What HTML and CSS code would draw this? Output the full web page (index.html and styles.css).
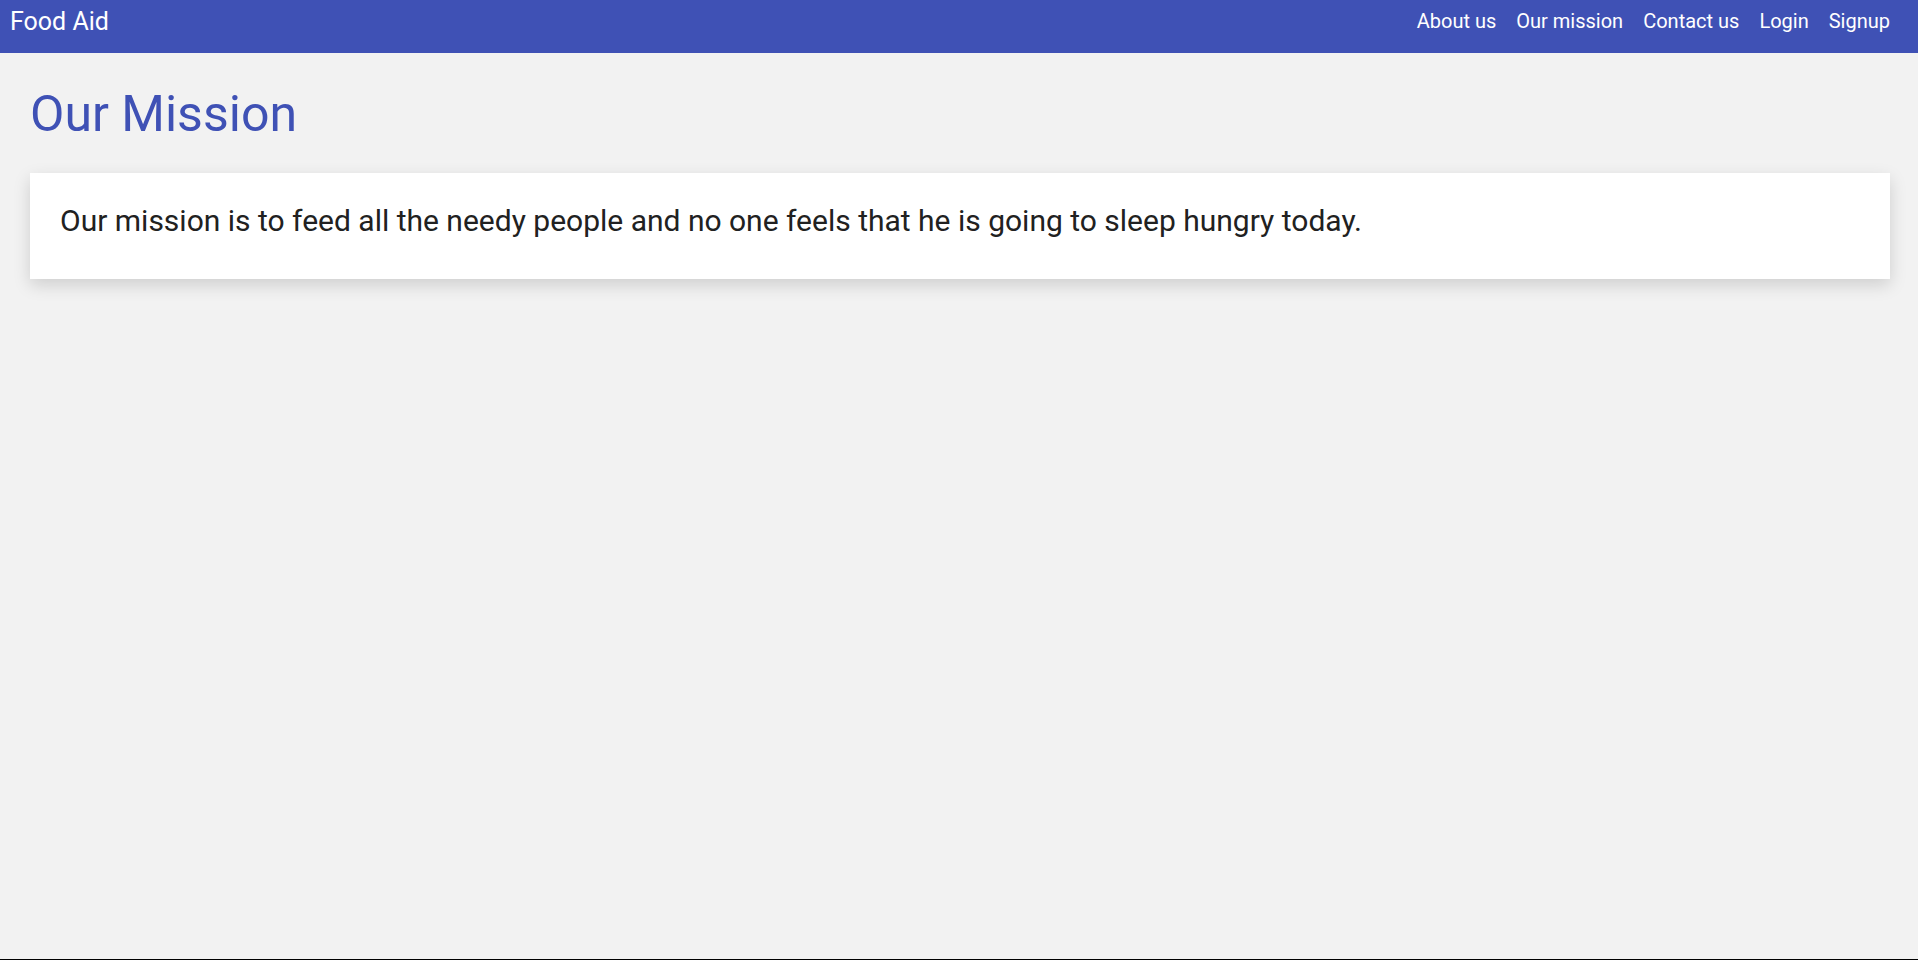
FILE: index.html
```html
<!DOCTYPE html>
<html lang="en">
<head>
<meta charset="utf-8">
<title>Food Aid - Our Mission</title>
<link rel="stylesheet" href="styles.css">
</head>
<body>
<header class="navbar">
  <a class="brand" href="#">Food Aid</a>
  <nav class="links">
    <a href="#">About us</a>
    <a href="#">Our mission</a>
    <a href="#">Contact us</a>
    <a href="#">Login</a>
    <a href="#">Signup</a>
  </nav>
</header>
<main class="content">
  <h1 class="title">Our Mission</h1>
  <section class="card">
    <p>Our mission is to feed all the needy people and no one feels that he is going to sleep hungry today.</p>
  </section>
</main>
</body>
</html>
```

FILE: styles.css
```css
* { box-sizing: border-box; }
html, body { margin: 0; padding: 0; }
body {
  background: #f2f2f2;
  font-family: Roboto, "Noto Sans", sans-serif;
  min-height: 100vh;
  border-bottom: 1px solid #000;
}
.navbar {
  height: 53px;
  background: #3f51b5;
  display: flex;
  align-items: center;
  justify-content: space-between;
  padding: 0 28px 0 10px;
}
.navbar a {
  color: #fff;
  text-decoration: none;
}
.brand {
  font-size: 25px;
  margin-top: -11px;
}
.links {
  display: flex;
  gap: 20px;
  margin-top: -11px;
}
.links a { font-size: 20px; }
.content {
  padding: 0 28px 0 30px;
}
.title {
  margin: 0;
  padding-top: 31px;
  font-weight: 400;
  font-size: 50px;
  line-height: 60px;
  color: #3f51b5;
}
.card {
  margin-top: 29px;
  background: #fff;
  padding: 19px 30px 29px;
  box-shadow: 0 6px 16px rgba(0,0,0,0.15);
}
.card p {
  margin: 0;
  font-size: 30px;
  line-height: 58px;
  color: #212121;
}
```
